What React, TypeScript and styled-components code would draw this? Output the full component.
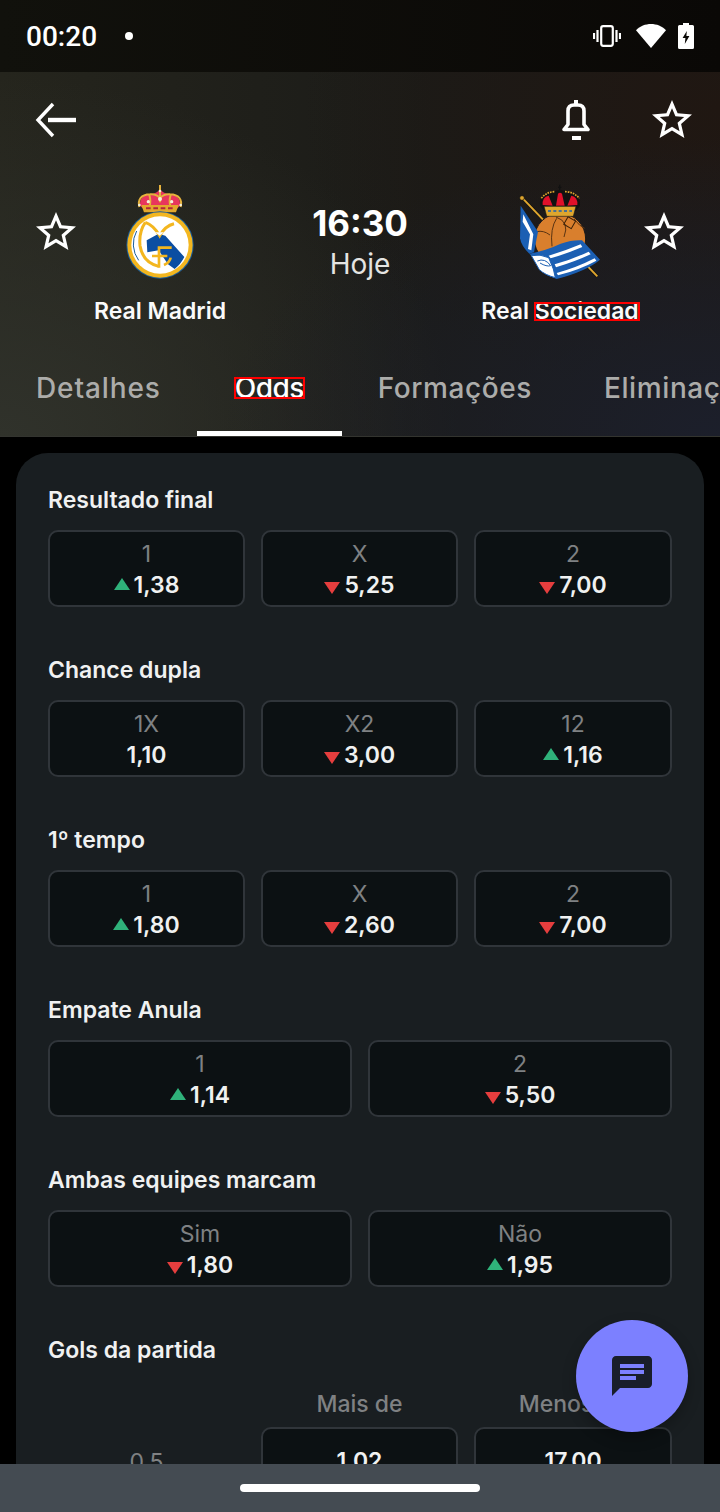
import React from 'react';
import styled, { createGlobalStyle } from 'styled-components';

const GlobalStyle = createGlobalStyle`
  html, body {
    margin: 0;
    padding: 0;
    background: #000;
  }
  * {
    box-sizing: border-box;
  }
`;

const Phone = styled.div`
  position: relative;
  width: 720px;
  height: 1512px;
  display: flex;
  flex-direction: column;
  overflow: hidden;
  background: #000;
  font-family: Inter, 'Liberation Sans', sans-serif;
  color: #f2f3f3;
`;

const StatusBar = styled.div`
  height: 72px;
  flex: none;
  display: flex;
  align-items: center;
  padding: 0 26px;
  background: linear-gradient(90deg, #11110c, #0a0806);
`;

const Clock = styled.span`
  font-family: Roboto, sans-serif;
  font-size: 28px;
  font-weight: 500;
  color: #fff;
`;

const Dot = styled.span`
  width: 8px;
  height: 8px;
  margin-left: 28px;
  border-radius: 50%;
  background: #fff;
`;

const StatusIcons = styled.div`
  margin-left: auto;
  display: flex;
  align-items: center;
  svg {
    display: block;
  }
`;

const Header = styled.header`
  height: 365px;
  flex: none;
  display: flex;
  flex-direction: column;
  background:
    radial-gradient(500px 300px at 100% 100%, #1c1f2b 0%, rgba(28, 31, 43, 0) 100%),
    radial-gradient(420px 300px at 100% 10%, #201712 0%, rgba(32, 23, 18, 0) 100%),
    radial-gradient(460px 360px at 0% 100%, #30322b 0%, rgba(48, 50, 43, 0) 100%),
    linear-gradient(90deg, #25251d 0%, #1b1b18 60%, #1b1a18 100%);
`;

const TopBar = styled.div`
  height: 96px;
  flex: none;
  display: flex;
  align-items: center;
  padding: 0 24px 0 32px;
`;

const TopActions = styled.div`
  margin-left: auto;
  display: flex;
  gap: 48px;
`;

const IconBox = styled.svg`
  display: block;
  width: 48px;
  height: 48px;
  flex: none;
`;

const MatchRow = styled.div`
  display: grid;
  grid-template-columns: 112px 96px 1fr 96px 112px;
  margin-top: 7px;
`;

const FavSlot = styled.div`
  display: flex;
  justify-content: center;
  padding-top: 33px;
`;

const Team = styled.div`
  display: flex;
  flex-direction: column;
  align-items: center;
`;

const Crest = styled.svg`
  display: block;
  flex: none;
  width: 140px;
  height: 115px;
`;

const TeamName = styled.div`
  margin-top: 6px;
  font-size: 23px;
  line-height: 30px;
  font-weight: 600;
  white-space: nowrap;
  color: #fafafa;
`;

const Marked = styled.span`
  display: inline-block;
  line-height: 0.72em;
  outline: 2px solid #f00;
  outline-offset: -1px;
`;

const Kickoff = styled.div`
  display: flex;
  flex-direction: column;
  align-items: center;
  padding-top: 26px;
`;

const KickoffTime = styled.div`
  font-size: 35px;
  line-height: 44px;
  font-weight: 700;
  color: #fff;
`;

const KickoffDay = styled.div`
  font-size: 28px;
  line-height: 38px;
  color: #e4e4e2;
`;

const Tabs = styled.nav`
  margin-top: auto;
  height: 97px;
  flex: none;
  display: flex;
  overflow: hidden;
  border-bottom: 1px solid #33342f;
`;

const Tab = styled.div<{ $active?: boolean; $tracking?: number }>`
  position: relative;
  flex: none;
  display: flex;
  align-items: center;
  padding: 0 ${(p) => (p.$active ? 38 : 36)}px;
  font-size: 28px;
  font-weight: 500;
  letter-spacing: ${(p) => p.$tracking ?? 0.6}px;
  white-space: nowrap;
  color: ${(p) => (p.$active ? '#fff' : '#acacaa')};
  &::after {
    content: '';
    display: ${(p) => (p.$active ? 'block' : 'none')};
    position: absolute;
    left: 0;
    right: 0;
    bottom: 0;
    height: 5px;
    background: #fff;
  }
`;

const Content = styled.main`
  flex: 1;
  min-height: 0;
  overflow: hidden;
  padding: 16px 16px 0;
`;

const Card = styled.section`
  display: flex;
  flex-direction: column;
  gap: 47px;
  padding: 31px 32px 32px;
  border-radius: 32px;
  background: #191e21;
`;

const Title = styled.h2`
  margin: 0 0 15px;
  padding-top: 1px;
  font-size: 23px;
  line-height: 30px;
  font-weight: 600;
  color: #f0f1f1;
`;

const Options = styled.div<{ $cols: number }>`
  display: grid;
  grid-template-columns: ${(p) => (p.$cols === 3 ? '197px 197px 198px' : 'repeat(2, 1fr)')};
  gap: 16px;
`;

const OddButton = styled.div`
  height: 77px;
  display: flex;
  flex-direction: column;
  align-items: center;
  padding-top: 7px;
  border: 2px solid #30353a;
  border-radius: 10px;
  background: #0c1113;
`;

const OddLabel = styled.div`
  margin-bottom: 1px;
  font-size: 23px;
  line-height: 30px;
  color: #7f8183;
`;

const OddValue = styled.div`
  display: flex;
  align-items: center;
  gap: 4px;
  font-size: 23px;
  line-height: 31px;
  font-weight: 600;
  color: #f0f1f1;
`;

const Arrow = styled.span<{ $dir: 'up' | 'down' }>`
  width: 0;
  height: 0;
  border-left: 8px solid transparent;
  border-right: 8px solid transparent;
  ${(p) =>
    p.$dir === 'up'
      ? 'border-bottom: 12px solid #2fb27a; margin-top: -4px;'
      : 'border-top: 12px solid #e53e3e; margin-top: 4px;'}
`;

const ColumnHead = styled.div`
  height: 30px;
  margin-top: 9px;
  margin-bottom: 8px;
  text-align: center;
  font-size: 23px;
  line-height: 30px;
  font-weight: 500;
  color: #7f8183;
`;

const LineLabel = styled.div`
  padding-top: 20px;
  text-align: center;
  font-size: 23px;
  line-height: 30px;
  color: #7f8183;
`;

const LineButton = styled(OddButton)`
  padding-top: 17px;
`;

const Fab = styled.button`
  position: absolute;
  right: 32px;
  bottom: 80px;
  width: 112px;
  height: 112px;
  display: flex;
  align-items: center;
  justify-content: center;
  padding: 0;
  border: 0;
  border-radius: 50%;
  background: #7c80ff;
  box-shadow: 0 6px 14px rgba(0, 0, 0, 0.25);
`;

const NavBar = styled.div`
  height: 48px;
  flex: none;
  position: relative;
  z-index: 1;
  display: flex;
  justify-content: center;
  padding-top: 20px;
  background: #444b52;
`;

const HomePill = styled.div`
  width: 240px;
  height: 8px;
  border-radius: 4px;
  background: #fff;
`;

type Odd = { label: string; value: string; dir?: 'up' | 'down' };
type Market = { title: string; odds: Odd[] };

const markets: Market[] = [
  {
    title: 'Resultado final',
    odds: [
      { label: '1', value: '1,38', dir: 'up' },
      { label: 'X', value: '5,25', dir: 'down' },
      { label: '2', value: '7,00', dir: 'down' },
    ],
  },
  {
    title: 'Chance dupla',
    odds: [
      { label: '1X', value: '1,10' },
      { label: 'X2', value: '3,00', dir: 'down' },
      { label: '12', value: '1,16', dir: 'up' },
    ],
  },
  {
    title: '1º tempo',
    odds: [
      { label: '1', value: '1,80', dir: 'up' },
      { label: 'X', value: '2,60', dir: 'down' },
      { label: '2', value: '7,00', dir: 'down' },
    ],
  },
  {
    title: 'Empate Anula',
    odds: [
      { label: '1', value: '1,14', dir: 'up' },
      { label: '2', value: '5,50', dir: 'down' },
    ],
  },
  {
    title: 'Ambas equipes marcam',
    odds: [
      { label: 'Sim', value: '1,80', dir: 'down' },
      { label: 'Não', value: '1,95', dir: 'up' },
    ],
  },
];

const StarIcon = () => (
  <IconBox viewBox="0 0 24 24" fill="#fff">
    <path d="M22 9.24l-7.19-.62L12 2 9.19 8.63 2 9.24l5.46 4.73L5.82 21 12 17.27 18.18 21l-1.63-7.03L22 9.24zM12 15.4l-3.76 2.27 1-4.28-3.32-2.88 4.38-.38L12 6.1l1.71 4.04 4.38.38-3.32 2.88 1 4.28L12 15.4z" />
  </IconBox>
);

const BackIcon = () => (
  <IconBox viewBox="0 0 48 48" fill="none" stroke="#fff">
    <path d="M21 8 L6 24 L21 40" strokeWidth="3.4" />
    <path d="M16 24 H44" strokeWidth="4.4" />
  </IconBox>
);

const BellIcon = () => (
  <IconBox viewBox="0 0 48 48" fill="#fff">
    <path d="M22 4h4v4h-4z" />
    <path
      d="M12 33.5 l4 -5 V15 q0 -6 6 -6 h4 q6 0 6 6 V28.5 l4 5 Z"
      fill="none"
      stroke="#fff"
      strokeWidth="3.6"
      strokeLinejoin="round"
    />
    <path d="M20 40h9v4h-9z" />
  </IconBox>
);

const VibrateIcon = () => (
  <svg width="28" height="22" viewBox="0 0 28 22" fill="none" stroke="#fff">
    <rect x="8.2" y="1.2" width="11.6" height="19.6" rx="2" strokeWidth="2.2" />
    <path d="M4.5 5v12M1 8v6M23.5 5v12M27 8v6" strokeWidth="2.2" />
  </svg>
);

const WifiIcon = () => (
  <svg width="30" height="26" viewBox="0 0 30 26" fill="#fff" style={{ marginLeft: 15 }}>
    <path d="M15 25 L0 7.2 C4 3 9.4 1 15 1 C20.6 1 26 3 30 7.2 Z" />
  </svg>
);

const BatteryIcon = () => (
  <svg width="16" height="26" viewBox="0 0 16 26" fill="#fff" style={{ marginLeft: 12 }}>
    <path
      fillRule="evenodd"
      d="M5 0h6v2h3.5q1.5 0 1.5 1.5v21q0 1.5-1.5 1.5h-13Q0 26 0 24.5v-21Q0 2 1.5 2H5z M8.8 8 L4.6 15 H7.4 L6.8 21 L11.4 13 H8.4 Z"
    />
  </svg>
);

const ChatIcon = () => (
  <IconBox viewBox="0 0 24 24" fill="#191e2b">
    <path d="M20 2H4c-1.1 0-2 .9-2 2v18l4-4h14c1.1 0 2-.9 2-2V4c0-1.1-.9-2-2-2zM6 9h12v2H6V9zm8 5H6v-2h8v2zm4-6H6V6h12v2z" />
  </IconBox>
);

const RealMadridCrest = () => (
  <Crest viewBox="0 0 420 345">
    {/* coroa */}
    <path d="M150 92 Q148 60 182 58 Q204 54 210 42 Q216 54 238 58 Q272 60 270 92 L262 100 H158 Z" fill="#e8365d" />
    <path
      d="M148 96 Q140 60 180 58 Q200 56 210 70 Q220 56 240 58 Q280 60 272 96 M210 30 V82 M178 60 Q184 78 178 96 M242 60 Q236 78 242 96"
      fill="none"
      stroke="#e6b23c"
      strokeWidth="6"
    />
    <path d="M154 90 H266 L258 112 H162 Z" fill="#e3a92c" />
    <path d="M168 100 H252" stroke="#b2243c" strokeWidth="6" strokeDasharray="14 8" />
    <circle cx="175" cy="80" r="5" fill="#f5f1dc" />
    <circle cx="210" cy="72" r="6" fill="#f5f1dc" />
    <circle cx="245" cy="80" r="5" fill="#f5f1dc" />
    <circle cx="148" cy="90" r="4" fill="#f5f1dc" />
    <circle cx="272" cy="90" r="4" fill="#f5f1dc" />
    <circle cx="210" cy="48" r="4" fill="#f5f1dc" />
    {/* escudo */}
    <circle cx="210" cy="210" r="101" fill="#1a5d9c" />
    <circle cx="210" cy="210" r="98" fill="#f3b61f" />
    <circle cx="210" cy="210" r="86" fill="#fff" />
    <path d="M170 196 L206 176 L226 182 L283 246 Q272 268 254 282 L234 268 L206 226 L172 232 Z" fill="#0b4ea2" />
    <path d="M140 168 A82 82 0 0 0 146 256" fill="none" stroke="#1a5d9c" strokeWidth="3" />
    <path d="M166 142 Q190 150 209 182 Q226 152 252 146" fill="none" stroke="#f3b61f" strokeWidth="9" />
    <path d="M166 142 Q146 170 150 212 Q158 262 206 274" fill="none" stroke="#f3b61f" strokeWidth="9" />
    <path d="M209 182 L196 172 H222 Z" fill="#fff" />
    <path d="M207 214 V278 M203 218 H245 M186 243 H232" fill="none" stroke="#f3b61f" strokeWidth="8" />
    <path d="M242 248 Q240 262 222 270" fill="none" stroke="#f3b61f" strokeWidth="8" />
  </Crest>
);

const SociedadCrest = () => (
  <Crest viewBox="0 0 420 345">
    {/* mastro */}
    <path d="M96 68 L322 304" stroke="#111" strokeWidth="10" />
    <path d="M96 68 L322 304" stroke="#dfa62e" strokeWidth="6" />
    <circle cx="96" cy="69" r="7" fill="#dfa62e" stroke="#111" strokeWidth="2" />
    {/* bola */}
    <circle cx="210" cy="192" r="77" fill="#d97f2d" stroke="#1a1a1a" strokeWidth="3" />
    <path d="M198 126 Q240 140 222 186 M200 130 Q180 160 186 214 M252 132 Q270 155 284 160 M140 170 Q160 165 180 180" fill="none" stroke="#5a3413" strokeWidth="3" />
    <rect x="226" y="130" width="26" height="26" fill="none" stroke="#3a2008" strokeWidth="3" transform="rotate(30 239 143)" />
    {/* coroa */}
    <path d="M150 92 Q146 60 176 54 Q195 44 210 46 Q225 44 244 54 Q274 60 270 92 L258 108 H162 Z" fill="#111" />
    <path d="M158 90 Q156 66 176 62 L188 92 Z M198 92 L204 56 Q210 50 216 56 L224 92 Z M232 92 L244 62 Q264 66 262 90 Z" fill="#e0102a" />
    <path d="M154 70 Q170 50 195 50 M225 50 Q250 50 268 70" fill="none" stroke="#dfa62e" strokeWidth="5" strokeDasharray="5 3" />
    <path d="M162 94 H258 L250 124 H170 Z" fill="#dfa62e" stroke="#1a1a1a" strokeWidth="2" />
    <path d="M174 108 H246" stroke="#1b5fb3" strokeWidth="5" strokeDasharray="9 7" />
    <path d="M204 37 h10 M209 29 v16" stroke="#111" strokeWidth="4" />
    {/* bandeira */}
    <path d="M92 92 L144 170 L132 232 L118 236 Q94 214 90 190 Z" fill="#1b5fb3" />
    <path d="M100 118 L130 178 L124 226 L114 222 L120 178 L98 140 Z" fill="#fff" />
    <path d="M118 236 Q170 226 212 206 Q248 194 276 196 L330 254 Q290 288 200 312 L170 300 L140 258 Z" fill="#1b5fb3" />
    <path d="M176 242 Q225 228 272 208 L277 216 Q230 236 182 250 Z M194 268 Q250 252 296 230 L302 238 Q255 260 198 277 Z M200 294 Q260 278 314 250 L319 257 Q270 284 204 301 Z" fill="#fff" />
    <path d="M124 242 Q150 236 176 248 L190 282 L196 308 Q165 300 148 284 Z" fill="#fff" stroke="#1b5fb3" strokeWidth="3" />
    <path d="M142 258 Q165 248 182 272 Q170 276 150 264" fill="none" stroke="#1b5fb3" strokeWidth="3" />
  </Crest>
);

const App = () => {
  return (
    <Phone>
      <GlobalStyle />
      <StatusBar>
        <Clock>00:20</Clock>
        <Dot />
        <StatusIcons>
          <VibrateIcon />
          <WifiIcon />
          <BatteryIcon />
        </StatusIcons>
      </StatusBar>

      <Header>
        <TopBar>
          <BackIcon />
          <TopActions>
            <BellIcon />
            <StarIcon />
          </TopActions>
        </TopBar>
        <MatchRow>
          <FavSlot>
            <StarIcon />
          </FavSlot>
          <Team>
            <RealMadridCrest />
            <TeamName>Real Madrid</TeamName>
          </Team>
          <Kickoff>
            <KickoffTime>16:30</KickoffTime>
            <KickoffDay>Hoje</KickoffDay>
          </Kickoff>
          <Team>
            <SociedadCrest />
            <TeamName>
              Real <Marked>Sociedad</Marked>
            </TeamName>
          </Team>
          <FavSlot>
            <StarIcon />
          </FavSlot>
        </MatchRow>
        <Tabs>
          <Tab $tracking={0.9}>Detalhes</Tab>
          <Tab $active $tracking={-0.6}>
            <Marked>Odds</Marked>
          </Tab>
          <Tab>Formações</Tab>
          <Tab>Eliminações</Tab>
        </Tabs>
      </Header>

      <Content>
        <Card>
          {markets.map((m) => (
            <div key={m.title}>
              <Title>{m.title}</Title>
              <Options $cols={m.odds.length}>
                {m.odds.map((o) => (
                  <OddButton key={o.label}>
                    <OddLabel>{o.label}</OddLabel>
                    <OddValue>
                      {o.dir && <Arrow $dir={o.dir} />}
                      {o.value}
                    </OddValue>
                  </OddButton>
                ))}
              </Options>
            </div>
          ))}
          <div>
            <Title>Gols da partida</Title>
            <Options $cols={3}>
              <div />
              <ColumnHead>Mais de</ColumnHead>
              <ColumnHead>Menos de</ColumnHead>
            </Options>
            <Options $cols={3}>
              <LineLabel>0,5</LineLabel>
              <LineButton>
                <OddValue>1,02</OddValue>
              </LineButton>
              <LineButton>
                <OddValue>17,00</OddValue>
              </LineButton>
            </Options>
          </div>
        </Card>
      </Content>

      <NavBar>
        <HomePill />
      </NavBar>
      <Fab>
        <ChatIcon />
      </Fab>
    </Phone>
  );
};

export default App;
